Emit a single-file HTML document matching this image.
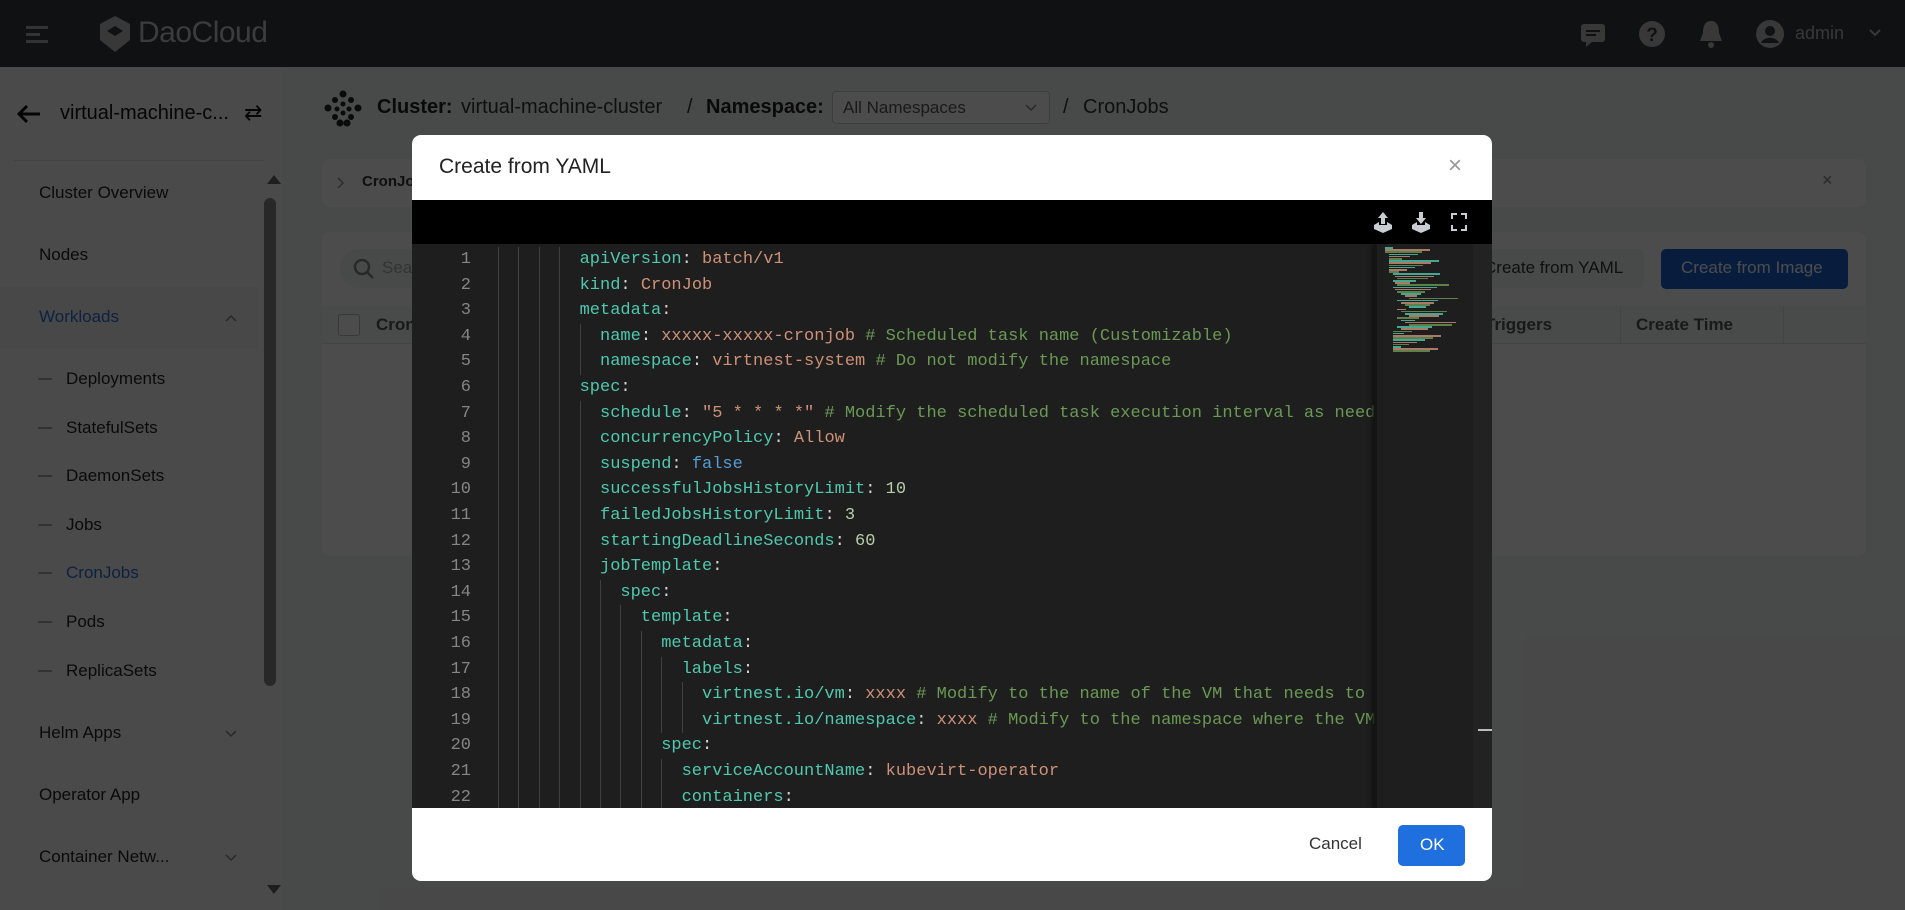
<!DOCTYPE html>
<html><head><meta charset="utf-8"><style>
*{box-sizing:border-box;margin:0;padding:0}
body{width:1905px;height:910px;overflow:hidden;position:relative;font-family:"Liberation Sans",sans-serif;background:#f2f3f5;color:#333}
.a{position:absolute;white-space:nowrap}
.hdr{left:0;top:0;width:1905px;height:67px;background:#363a40}
.side{left:0;top:67px;width:282px;height:843px;background:#f8f8f9}
.si{position:absolute;left:39px;font-size:17px;color:#222}
.sub{left:66px}
.dash{position:absolute;left:38px;width:14px;height:2px;background:#aaa}
.card{background:#fff;border-radius:8px}
.ov{left:0;top:0;width:1905px;height:910px;background:rgba(0,0,0,0.7)}
.modal{left:412px;top:135px;width:1080px;height:746px;background:#fff;border-radius:9px;overflow:hidden}
.code{position:absolute;left:0;top:109px;width:1080px;height:564px;background:#1e1e1e;overflow:hidden}
.ln{position:absolute;left:0;width:59px;text-align:right;font:17px "Liberation Mono",monospace;color:#858585;height:25.6px;line-height:25.6px}
.tx{position:absolute;left:86px;font:17px "Liberation Mono",monospace;white-space:pre;height:25.6px;line-height:25.6px;color:#d4d4d4}
.g{position:absolute;width:1px;background:#404040;height:25.6px}
.k{color:#4ec9b0}.v{color:#ce9178}.c{color:#6a9955}.b{color:#569cd6}.n{color:#b5cea8}
</style></head><body>
<div class="a hdr"></div>
<svg class="a" style="left:26px;top:24px" width="24" height="20"><rect x="0" y="2" width="22" height="3" fill="#aaa"/><rect x="0" y="9" width="14" height="3" fill="#aaa"/><rect x="0" y="16" width="22" height="3" fill="#aaa"/></svg>
<svg class="a" style="left:97px;top:14px" width="36" height="40"><path d="M18 2 L33 10 L33 26 L18 38 L3 26 L3 10 Z" fill="#bbb"/><path d="M18 12 L26 17 L18 22 L10 17Z" fill="#363a40"/></svg>
<div class="a" style="left:138px;top:16px;font-size:30px;color:#c8c8c8;letter-spacing:-0.5px">DaoCloud</div>
<svg class="a" style="left:1580px;top:22px" width="26" height="26"><rect x="1" y="2" width="24" height="18" rx="3" fill="#bbb"/><path d="M6 20 L6 25 L12 20Z" fill="#bbb"/><rect x="6" y="8" width="14" height="2" fill="#363a40"/><rect x="6" y="12" width="10" height="2" fill="#363a40"/></svg>
<svg class="a" style="left:1638px;top:20px" width="28" height="28"><circle cx="14" cy="14" r="13" fill="#bbb"/><text x="14" y="21" font-size="19" font-weight="bold" text-anchor="middle" fill="#363a40" font-family="Liberation Sans">?</text></svg>
<svg class="a" style="left:1698px;top:19px" width="26" height="30"><path d="M13 2 C6 2 5 9 5 14 L2 22 L24 22 L21 14 C21 9 20 2 13 2Z" fill="#bbb"/><circle cx="13" cy="26" r="3" fill="#bbb"/></svg>
<svg class="a" style="left:1755px;top:19px" width="30" height="30"><circle cx="15" cy="15" r="14" fill="#bbb"/><circle cx="15" cy="12" r="5" fill="#363a40"/><path d="M6 24 C9 17 21 17 24 24Z" fill="#363a40"/></svg>
<div class="a" style="left:1795px;top:23px;font-size:18px;color:#bbb">admin</div>
<svg class="a" style="left:1868px;top:28px" width="14" height="10"><path d="M2 2 L7 7 L12 2" stroke="#bbb" stroke-width="2" fill="none"/></svg>

<div class="a side"></div>
<svg class="a" style="left:16px;top:104px" width="26" height="20"><path d="M24 10 L3 10 M11 2 L3 10 L11 18" stroke="#111" stroke-width="3" fill="none"/></svg>
<div class="a" style="left:60px;top:102px;font-size:20px;color:#111">virtual-machine-c...</div>
<div class="a" style="left:244px;top:100px;font-size:22px;color:#111">&#8644;</div>
<div class="a" style="left:14px;top:160px;width:250px;height:1px;background:#e0e0e0"></div>
<div class="a" style="left:267px;top:175px;width:0;height:0;border-left:7px solid transparent;border-right:7px solid transparent;border-bottom:9px solid #666"></div>
<div class="a" style="left:264px;top:198px;width:12px;height:488px;border-radius:6px;background:#888"></div>
<div class="a" style="left:267px;top:885px;width:0;height:0;border-left:7px solid transparent;border-right:7px solid transparent;border-top:9px solid #666"></div>
<div class="si" style="top:183px">Cluster Overview</div>
<div class="si" style="top:245px">Nodes</div>
<div class="a" style="left:0;top:287px;width:258px;height:62px;background:#f0f2f5"></div>
<div class="si" style="top:307px;color:#2f6fd6">Workloads</div>
<svg class="a" style="left:224px;top:313px" width="14" height="10"><path d="M2 8 L7 3 L12 8" stroke="#888" stroke-width="1.5" fill="none"/></svg>
<div class="dash" style="top:378px"></div><div class="si sub" style="top:369px">Deployments</div>
<div class="dash" style="top:427px"></div><div class="si sub" style="top:418px">StatefulSets</div>
<div class="dash" style="top:475px"></div><div class="si sub" style="top:466px">DaemonSets</div>
<div class="dash" style="top:524px"></div><div class="si sub" style="top:515px">Jobs</div>
<div class="dash" style="top:572px"></div><div class="si sub" style="top:563px;color:#2f6fd6">CronJobs</div>
<div class="dash" style="top:621px"></div><div class="si sub" style="top:612px">Pods</div>
<div class="dash" style="top:670px"></div><div class="si sub" style="top:661px">ReplicaSets</div>
<div class="si" style="top:723px">Helm Apps</div><svg class="a" style="left:224px;top:729px" width="14" height="10"><path d="M2 2 L7 7 L12 2" stroke="#888" stroke-width="1.5" fill="none"/></svg>
<div class="si" style="top:785px">Operator App</div>
<div class="si" style="top:847px">Container Netw...</div><svg class="a" style="left:224px;top:853px" width="14" height="10"><path d="M2 2 L7 7 L12 2" stroke="#888" stroke-width="1.5" fill="none"/></svg>

<svg class="a" style="left:323px;top:90px" width="40" height="38"><g fill="#222"><circle cx="20" cy="4" r="3.5"/><circle cx="12" cy="10" r="3"/><circle cx="28" cy="10" r="3"/><circle cx="20" cy="14" r="2.5"/><circle cx="5" cy="18" r="3.5"/><circle cx="35" cy="18" r="3.5"/><circle cx="14" cy="19" r="2.5"/><circle cx="26" cy="19" r="2.5"/><circle cx="20" cy="23" r="2.5"/><circle cx="12" cy="27" r="3"/><circle cx="28" cy="27" r="3"/><circle cx="17" cy="33" r="3.5"/><circle cx="24" cy="33" r="3.5"/></g></svg>
<div class="a" style="left:377px;top:96px;font-size:20px;font-weight:bold;color:#222">Cluster:</div>
<div class="a" style="left:461px;top:96px;font-size:20px;color:#333">virtual-machine-cluster</div>
<div class="a" style="left:687px;top:96px;font-size:20px;color:#333">/</div>
<div class="a" style="left:706px;top:96px;font-size:20px;font-weight:bold;color:#222">Namespace:</div>
<div class="a card" style="left:832px;top:91px;width:218px;height:33px;border:1px solid #ccc;border-radius:4px"></div>
<div class="a" style="left:843px;top:98px;font-size:17px;color:#555">All Namespaces</div>
<svg class="a" style="left:1024px;top:103px" width="14" height="10"><path d="M2 2 L7 7 L12 2" stroke="#888" stroke-width="1.5" fill="none"/></svg>
<div class="a" style="left:1063px;top:96px;font-size:20px;color:#333">/</div>
<div class="a" style="left:1083px;top:96px;font-size:20px;color:#333">CronJobs</div>

<div class="a card" style="left:322px;top:159px;width:1544px;height:48px"></div>
<svg class="a" style="left:336px;top:176px" width="10" height="14"><path d="M2 2 L7 7 L2 12" stroke="#999" stroke-width="1.5" fill="none"/></svg>
<div class="a" style="left:362px;top:173px;font-size:15px;font-weight:bold;color:#333">CronJobs</div>
<div class="a" style="left:1822px;top:170px;font-size:18px;color:#888">&#215;</div>
<div class="a card" style="left:322px;top:232px;width:1544px;height:324px"></div>
<div class="a" style="left:340px;top:249px;width:300px;height:39px;border-radius:20px;background:#f2f3f5"></div>
<svg class="a" style="left:353px;top:258px" width="22" height="22"><circle cx="9" cy="9" r="7" stroke="#888" stroke-width="2.5" fill="none"/><path d="M14 14 L20 20" stroke="#888" stroke-width="2.5"/></svg>
<div class="a" style="left:382px;top:258px;font-size:17px;color:#aaa">Search</div>
<div class="a" style="left:1480px;top:249px;width:164px;height:39px;border-radius:5px;background:#f2f3f5"></div>
<div class="a" style="left:1484px;top:258px;font-size:17px;color:#333">Create from YAML</div>
<div class="a" style="left:1661px;top:249px;width:187px;height:40px;border-radius:5px;background:#1c5fd1"></div>
<div class="a" style="left:1681px;top:258px;font-size:17px;color:#fff">Create from Image</div>
<div class="a" style="left:322px;top:306px;width:1544px;height:38px;background:#f6f7f9;border-bottom:1px solid #e5e5e5"></div>
<div class="a" style="left:338px;top:314px;width:22px;height:22px;border:1px solid #bbb;border-radius:3px;background:#fff"></div>
<div class="a" style="left:376px;top:315px;font-size:17px;font-weight:bold;color:#555">CronJob Name</div>
<div class="a" style="left:1485px;top:315px;font-size:17px;font-weight:bold;color:#555">Triggers</div>
<div class="a" style="left:1620px;top:306px;width:1px;height:38px;background:#e0e0e0"></div>
<div class="a" style="left:1636px;top:315px;font-size:17px;font-weight:bold;color:#555">Create Time</div>
<div class="a" style="left:1783px;top:306px;width:1px;height:38px;background:#e0e0e0"></div>

<div class="a ov"></div>

<div class="a modal">
<div class="a" style="left:27px;top:20px;font-size:21px;color:#222">Create from YAML</div>
<div class="a" style="left:1036px;top:17px;font-size:24px;color:#999">&#215;</div>
<div class="a" style="left:0;top:65px;width:1080px;height:44px;background:#000"></div>
<svg class="a" style="left:961px;top:75px" width="110" height="26"><g fill="#c8cdd4"><path d="M10 2 L15 8 L12 8 L12 14 L8 14 L8 8 L5 8Z"/><path d="M1 15 L6 12 L6 15 L14 15 L14 12 L19 15 L19 19 L10 23 L1 19Z"/><path d="M48 14 L53 8 L50 8 L50 2 L46 2 L46 8 L43 8Z"/><path d="M39 15 L44 12 L44 15 L52 15 L52 12 L57 15 L57 19 L48 23 L39 19Z"/><path d="M78 3 L84 3 L84 5 L80 5 L80 9 L78 9Z M94 3 L88 3 L88 5 L92 5 L92 9 L94 9Z M78 21 L84 21 L84 19 L80 19 L80 15 L78 15Z M94 21 L88 21 L88 19 L92 19 L92 15 L94 15Z"/></g></svg>
<div class="code" id="code">
<div class="a" style="left:963px;top:0;width:98px;height:564px;background:#1e1e1e;border-left:2px solid #151515;box-shadow:-3px 0 4px #111"></div>
<div class="a" style="left:1061px;top:0;width:19px;height:564px;background:#222"></div>
<div class="a" style="left:1066px;top:485px;width:14px;height:2px;background:#bbb"></div>
</div>
<div class="a" style="left:897px;top:699px;font-size:17px;color:#333">Cancel</div>
<div class="a" style="left:986px;top:690px;width:67px;height:41px;border-radius:5px;background:#1f6fde"></div>
<div class="a" style="left:1008px;top:700px;font-size:17px;color:#fff">OK</div>
</div>

<script>
var L=[
[0,'<span class="k">apiVersion</span>: <span class="v">batch/v1</span>'],
[0,'<span class="k">kind</span>: <span class="v">CronJob</span>'],
[0,'<span class="k">metadata</span>:'],
[1,'<span class="k">name</span>: <span class="v">xxxxx-xxxxx-cronjob</span> <span class="c"># Scheduled task name (Customizable)</span>'],
[1,'<span class="k">namespace</span>: <span class="v">virtnest-system</span> <span class="c"># Do not modify the namespace</span>'],
[0,'<span class="k">spec</span>:'],
[1,'<span class="k">schedule</span>: <span class="v">"5 * * * *"</span> <span class="c"># Modify the scheduled task execution interval as needed</span>'],
[1,'<span class="k">concurrencyPolicy</span>: <span class="v">Allow</span>'],
[1,'<span class="k">suspend</span>: <span class="b">false</span>'],
[1,'<span class="k">successfulJobsHistoryLimit</span>: <span class="n">10</span>'],
[1,'<span class="k">failedJobsHistoryLimit</span>: <span class="n">3</span>'],
[1,'<span class="k">startingDeadlineSeconds</span>: <span class="n">60</span>'],
[1,'<span class="k">jobTemplate</span>:'],
[2,'<span class="k">spec</span>:'],
[3,'<span class="k">template</span>:'],
[4,'<span class="k">metadata</span>:'],
[5,'<span class="k">labels</span>:'],
[6,'<span class="k">virtnest.io/vm</span>: <span class="v">xxxx</span> <span class="c"># Modify to the name of the VM that needs to be scheduled</span>'],
[6,'<span class="k">virtnest.io/namespace</span>: <span class="v">xxxx</span> <span class="c"># Modify to the namespace where the VM is located</span>'],
[4,'<span class="k">spec</span>:'],
[5,'<span class="k">serviceAccountName</span>: <span class="v">kubevirt-operator</span>'],
[5,'<span class="k">containers</span>:']];
var h='',cw=10.2,ox=86;
L.forEach(function(l,i){var t=(3+i*25.6).toFixed(1);
h+='<div class="ln" style="top:'+t+'px">'+(i+1)+'</div>';
for(var k=0;k<4+l[0];k++)h+='<div class="g" style="left:'+(ox+k*2*cw).toFixed(1)+'px;top:'+t+'px"></div>';
h+='<div class="tx" style="left:'+(ox+(8+2*l[0])*cw).toFixed(1)+'px;top:'+t+'px">'+l[1]+'</div>';});
var cols=['#4ec9b0','#ce9178','#6a9955'];
for(var i=0;i<48;i++){var ind=(i<3?0:i<12?2:i<20?4+(i%3):i<38?6+(i%4)*2:4);var w=8+((i*37)%45);
h+='<div class="a" style="left:'+(973+ind*2)+'px;top:'+(3+i*2.2).toFixed(1)+'px;width:'+w+'px;height:1.5px;background:'+cols[i%3]+';opacity:.8;z-index:2"></div>';}
var c=document.getElementById('code');c.insertAdjacentHTML('afterbegin',h);
</script>
</body></html>
